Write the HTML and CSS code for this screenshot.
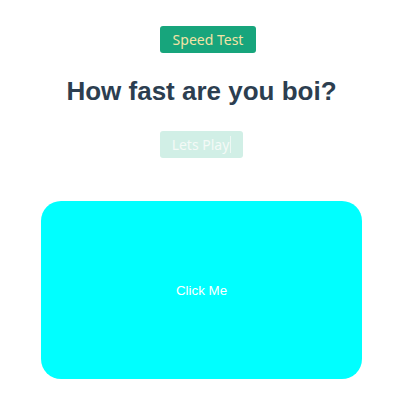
FILE: index.html
```html
<!DOCTYPE html>
<html>
<head>
<meta charset="utf-8">
<link rel="stylesheet" href="styles.css">
</head>
<body>
<div class="app">
  <button class="btn btn-title">Speed Test</button>
  <h1 class="heading">How fast are you boi?</h1>
  <button class="btn btn-play" disabled>Lets Play<span class="caret"></span></button>
  <div class="box">Click Me</div>
</div>
</body>
</html>
```
FILE: styles.css
```css
html, body {
  margin: 0;
  padding: 0;
  background: #ffffff;
}
.app {
  display: flex;
  flex-direction: column;
  align-items: flex-start;
  padding-top: 26px;
  font-family: "Liberation Sans", Arial, sans-serif;
}
.btn {
  font-family: "Noto Sans", "DejaVu Sans", sans-serif;
  font-size: 14px;
  border: none;
  border-radius: 3px;
  height: 27px;
  padding: 0;
  margin: 0 0 0 160px;
  display: flex;
  align-items: center;
  justify-content: center;
}
.btn-title {
  background: #17a57c;
  color: #f3e3a6;
  width: 96px;
}
.btn-play {
  background: #d1efe6;
  color: #f4faf7;
  width: 83px;
  margin-top: 25px;
}
.caret {
  display: inline-block;
  width: 1px;
  height: 17px;
  margin-left: 1px;
  background: #eef8f4;
}
.heading {
  align-self: stretch;
  text-align: center;
  margin: 23px 0 0 3px;
  font-size: 26px;
  line-height: 30px;
  font-weight: bold;
  color: #2c3e50;
}
.box {
  margin: 43px 0 0 41px;
  width: 321px;
  height: 178px;
  border-radius: 20px;
  background: #00ffff;
  color: #ffffff;
  font-size: 13.33px;
  display: flex;
  align-items: center;
  justify-content: center;
}
```
